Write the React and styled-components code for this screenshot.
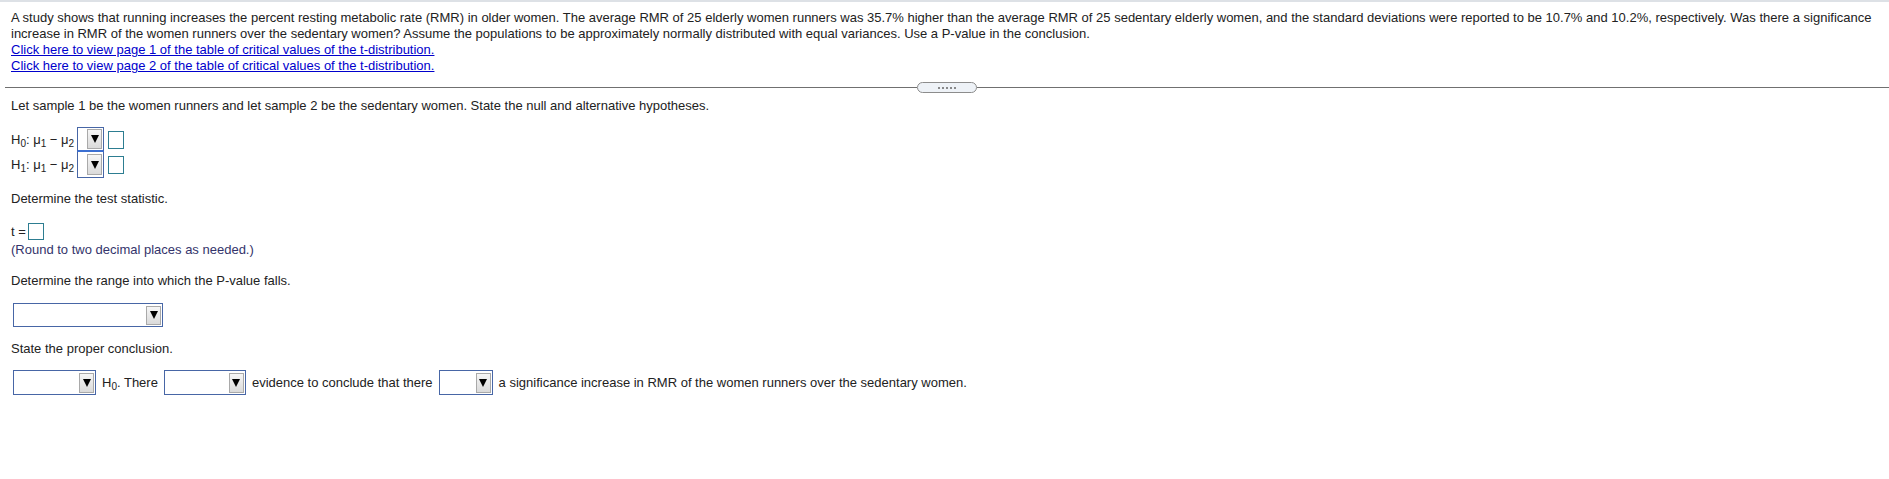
import React from "react";
import styled, { createGlobalStyle } from "styled-components";

const GlobalStyle = createGlobalStyle`
  body {
    margin: 0;
    background: #fff;
    font-family: "Liberation Sans", Arial, sans-serif;
    font-size: 13px;
    color: #222;
  }
`;

const Page = styled.div`
  border-top: 2px solid #dde1e6;
  min-height: 477px;
`;

const Question = styled.div`
  padding: 8px 8px 0 11px;
  line-height: 16px;
`;

const TableLink = styled.a`
  display: block;
  width: fit-content;
  color: #0000cc;
  text-decoration: underline;
  cursor: pointer;
`;

const Divider = styled.div`
  display: flex;
  align-items: center;
  height: 11px;
  margin-top: 8px;
  padding-left: 5px;
`;

const Rule = styled.div`
  flex: 1;
  height: 1px;
  background: #707070;
`;

const MoreButton = styled.div`
  box-sizing: border-box;
  width: 60px;
  height: 11px;
  border: 1px solid #8c8c8c;
  border-radius: 6px;
  background: #eef2f7;
  display: flex;
  align-items: center;
  justify-content: center;
  gap: 2px;
`;

const Dot = styled.span`
  width: 2px;
  height: 2px;
  border-radius: 50%;
  background: #666;
`;

const Body = styled.div`
  padding: 5px 8px 0 11px;
  line-height: 16px;
`;

const Prompt = styled.p`
  margin: ${(p) => p.$mt || 0}px 0 0;
`;

const Hint = styled(Prompt)`
  color: #34346b;
`;

const Sub = styled.sub`
  font-size: 10px;
  line-height: 0;
  vertical-align: -3px;
`;

const HypBlock = styled.div`
  margin-top: 13px;
`;

const HypRow = styled.div`
  display: flex;
  align-items: center;
`;

const HypLabel = styled.span`
  width: 66px;
  white-space: nowrap;
`;

const SelectBox = styled.div`
  box-sizing: border-box;
  display: flex;
  justify-content: flex-end;
  align-items: center;
  width: ${(p) => p.$w}px;
  height: ${(p) => p.$h}px;
  margin-left: ${(p) => p.$ml || 0}px;
  border: 1px solid #4766a6;
  border-top-width: ${(p) => (p.$joined ? 0 : 1)}px;
  border-bottom: ${(p) => (p.$active ? "2px solid #3b6fd1" : "1px solid #4766a6")};
  padding-right: 1px;
  background: #fff;
  flex-shrink: 0;
`;

const ArrowButton = styled.span`
  box-sizing: border-box;
  width: 15px;
  height: ${(p) => p.$h}px;
  border: 1px solid #a9a9a9;
  background: linear-gradient(#f6f6f6, #dadada);
  display: flex;
  align-items: center;
  justify-content: center;
`;

const Triangle = styled.span`
  width: 0;
  height: 0;
  border-left: 4px solid transparent;
  border-right: 4px solid transparent;
  border-top: 8px solid #000;
`;

const AnswerBox = styled.span`
  box-sizing: border-box;
  display: inline-block;
  width: 16px;
  height: ${(p) => p.$h}px;
  margin-left: ${(p) => p.$ml || 0}px;
  border: 1px solid #2d7d91;
  background: #fff;
`;

const StatRow = styled.div`
  display: flex;
  align-items: center;
  height: 17px;
  margin-top: 16px;
`;

const RangeRow = styled.div`
  margin-top: 14px;
`;

const ConclusionRow = styled.div`
  display: flex;
  align-items: center;
  gap: 6px;
  margin-top: 13px;
  white-space: nowrap;
`;

const Dropdown = ({ w, h, ml, active, joined }) => (
  <SelectBox $w={w} $h={h} $ml={ml} $active={active} $joined={joined}>
    <ArrowButton $h={h - 5}>
      <Triangle />
    </ArrowButton>
  </SelectBox>
);

const App = () => {
  return (
    <Page>
      <GlobalStyle />
      <Question>
        A study shows that running increases the percent resting metabolic rate (RMR) in older women. The average RMR of 25 elderly women runners was 35.7% higher than the average RMR of 25 sedentary elderly women, and the standard deviations were reported to be 10.7% and 10.2%, respectively. Was there a significance increase in RMR of the women runners over the sedentary women? Assume the populations to be approximately normally distributed with equal variances. Use a P-value in the conclusion.
        <TableLink>Click here to view page 1 of the table of critical values of the t-distribution.</TableLink>
        <TableLink>Click here to view page 2 of the table of critical values of the t-distribution.</TableLink>
      </Question>

      <Divider>
        <Rule />
        <MoreButton>
          {[0, 1, 2, 3, 4].map((i) => (
            <Dot key={i} />
          ))}
        </MoreButton>
        <Rule />
      </Divider>

      <Body>
        <Prompt>
          Let sample 1 be the women runners and let sample 2 be the sedentary women. State the null and alternative hypotheses.
        </Prompt>

        <HypBlock>
          <HypRow>
            <HypLabel>
              H<Sub>0</Sub>: μ<Sub>1</Sub> − μ<Sub>2</Sub>
            </HypLabel>
            <Dropdown w={27} h={25} active />
            <AnswerBox $h={18} $ml={4} />
          </HypRow>
          <HypRow>
            <HypLabel>
              H<Sub>1</Sub>: μ<Sub>1</Sub> − μ<Sub>2</Sub>
            </HypLabel>
            <Dropdown w={27} h={26} joined />
            <AnswerBox $h={18} $ml={4} />
          </HypRow>
        </HypBlock>

        <Prompt $mt={13}>Determine the test statistic.</Prompt>
        <StatRow>
          t =<AnswerBox $h={17} $ml={2} />
        </StatRow>
        <Hint $mt={2}>(Round to two decimal places as needed.)</Hint>

        <Prompt $mt={15}>Determine the range into which the P-value falls.</Prompt>
        <RangeRow>
          <Dropdown w={150} h={24} ml={2} />
        </RangeRow>

        <Prompt $mt={14}>State the proper conclusion.</Prompt>
        <ConclusionRow>
          <Dropdown w={83} h={25} ml={2} />
          <span>
            H<Sub>0</Sub>. There
          </span>
          <Dropdown w={82} h={25} />
          <span>evidence to conclude that there</span>
          <Dropdown w={54} h={25} />
          <span>a significance increase in RMR of the women runners over the sedentary women.</span>
        </ConclusionRow>
      </Body>
    </Page>
  );
};

export default App;
